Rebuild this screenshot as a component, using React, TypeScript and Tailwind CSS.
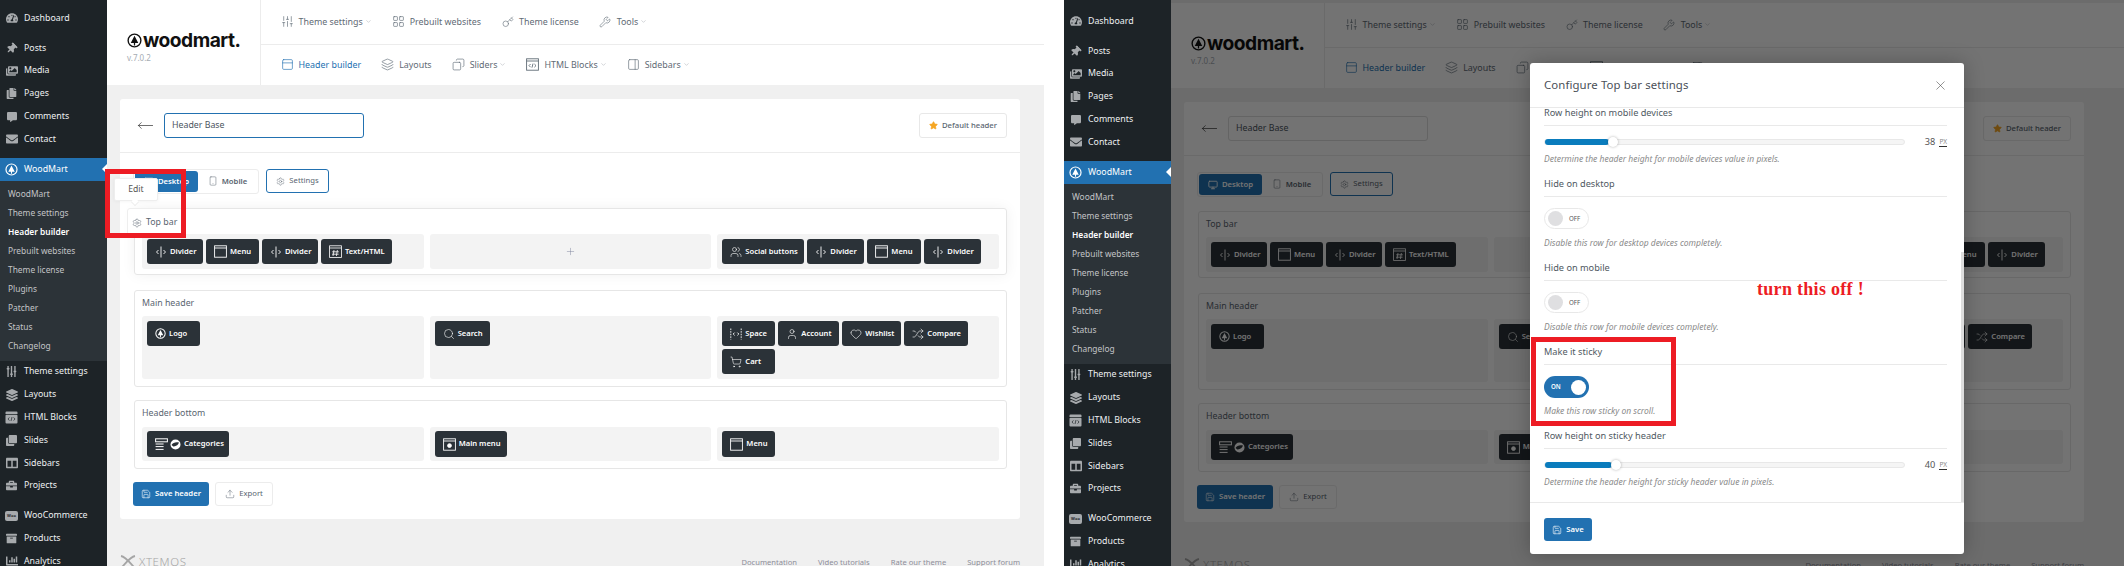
import React from "react";
import {
  SlidersVertical, LayoutGrid, Key, Wrench, ChevronDown, PanelTop, Layers, Copy, PanelRight,
  MoveLeft, Star, Monitor, Smartphone, Settings, Plus, Users, Search, User, Heart, Shuffle, ShoppingCart, Save, Upload, X,
} from "lucide-react";
import {
  FaTachometerAlt, FaThumbtack, FaImages, FaCopy, FaCommentAlt, FaEnvelope, FaSlidersH, FaLayerGroup, FaClone, FaColumns, FaBriefcase, FaArchive, FaChartBar,
} from "react-icons/fa";

function TreeMark({ size = 14, color = "currentColor", fill = "none" }: { size?: number; color?: string; fill?: string }) {
  return (
    <svg width={size} height={size} viewBox="0 0 24 24" className="shrink-0">
      <circle cx="12" cy="12" r="10.2" fill={fill} stroke={color} strokeWidth="2.2" />
      <path d="M12 4.5 18 16h-5v4h-2v-4H6z" fill={color} />
    </svg>
  );
}

function DividerIcon() {
  return (
    <svg width="12" height="12" viewBox="0 0 12 12" fill="none" stroke="currentColor" strokeWidth="0.9" className="shrink-0">
      <path d="M6 0.5v11" />
      <path d="M3.5 4 1.5 6l2 2M8.5 4l2 2-2 2" />
    </svg>
  );
}
function SpaceIcon() {
  return (
    <svg width="12" height="12" viewBox="0 0 12 12" fill="none" stroke="currentColor" strokeWidth="0.9" className="shrink-0">
      <path d="M0.8 0.5v11M11.2 0.5v11" strokeDasharray="1.6 1" />
      <path d="M4.6 4.6 3.2 6l1.4 1.4M7.4 4.6 8.8 6 7.4 7.4" />
    </svg>
  );
}
function HtmlIcon() {
  return (
    <svg width="13" height="13" viewBox="0 0 13 13" fill="none" stroke="currentColor" strokeWidth="0.8" className="shrink-0">
      <rect x="0.6" y="0.8" width="11.8" height="11.6" />
      <path d="M0.6 3h11.8M5 5l-1 6M8.4 5l-1 6M3.2 6.8h6.6M3 9.2h6.6" />
    </svg>
  );
}
function MenuIcon() {
  return (
    <svg width="13" height="13" viewBox="0 0 13 13" fill="none" stroke="currentColor" strokeWidth="0.9" className="shrink-0">
      <rect x="0.6" y="0.8" width="11.8" height="11.4" />
      <path d="M0.6 3h11.8" />
    </svg>
  );
}
function MainMenuIcon() {
  return (
    <svg width="13" height="13" viewBox="0 0 13 13" fill="none" stroke="currentColor" strokeWidth="0.9" className="shrink-0">
      <rect x="0.6" y="0.8" width="11.8" height="11.4" />
      <path d="M0.6 3h11.8" />
      <circle cx="6.5" cy="7.6" r="1.9" fill="currentColor" />
    </svg>
  );
}
function CategoriesIcon() {
  return (
    <span className="flex items-center gap-[2px] shrink-0">
      <svg width="13" height="13" viewBox="0 0 13 13" fill="none" stroke="currentColor" strokeWidth="1">
        <rect x="0.6" y="0.8" width="11.8" height="3" />
        <path d="M0.6 6h8M0.6 8.6h8M0.6 11.4h8" />
      </svg>
      <svg width="11" height="11" viewBox="0 0 11 11">
        <circle cx="5.5" cy="5.5" r="5" fill="#fff" />
        <path d="M1.5 6C3 3.5 6 2.8 9 3.6 8.4 6 6 7.6 3.4 7.4z" fill="#2b3238" />
      </svg>
    </span>
  );
}
function HtmlBlockNavIcon() {
  return (
    <svg width="13" height="13" viewBox="0 0 13 13" fill="none" stroke="currentColor" strokeWidth="0.9">
      <rect x="0.6" y="0.8" width="11.8" height="11.4" />
      <path d="M0.6 3h11.8M4.6 6 3 7.6l1.6 1.6M8.4 6 10 7.6 8.4 9.2M7 5.6 6 9.6" />
    </svg>
  );
}
function HtmlBlockWpIcon() {
  return (
    <svg width="13" height="13" viewBox="0 0 13 13">
      <path d="M1.5 0.5h10a1 1 0 0 1 1 1V3H.5V1.500a1 1 0 0 1 1-1z" fill="currentColor" />
      <rect x="0.5" y="3.800" width="12" height="8.700" rx="1" fill="currentColor" />
      <path d="M4.400 6.400 3 8l1.400 1.600M8.600 6.400 10 8 8.600 9.600M7 6 6 10" fill="none" stroke="#1d2327" strokeWidth="0.7" />
    </svg>
  );
}

const wpItemsA = [
  { t: "Dashboard", i: <FaTachometerAlt size={12} />, c: "" },
  { t: "Posts", i: <FaThumbtack size={11} className="rotate-45" />, c: "mt-[7px]" },
  { t: "Media", i: <FaImages size={12} />, c: "" },
  { t: "Pages", i: <FaCopy size={11} />, c: "" },
  { t: "Comments", i: <FaCommentAlt size={10} />, c: "" },
  { t: "Contact", i: <FaEnvelope size={12} />, c: "" },
];
const wpSub = ["WoodMart", "Theme settings", "Header builder", "Prebuilt websites", "Theme license", "Plugins", "Patcher", "Status", "Changelog"];
const wpItemsB = [
  { t: "Theme settings", i: <FaSlidersH size={11} className="rotate-90" />, c: "" },
  { t: "Layouts", i: <FaLayerGroup size={12} />, c: "" },
  { t: "HTML Blocks", i: <HtmlBlockWpIcon />, c: "" },
  { t: "Slides", i: <FaClone size={11} />, c: "" },
  { t: "Sidebars", i: <FaColumns size={12} />, c: "" },
  { t: "Projects", i: <FaBriefcase size={11} />, c: "" },
  {
    t: "WooCommerce",
    i: <span className="flex h-[10px] w-[13px] items-center justify-center rounded-[2px] bg-[#a7aaad] text-[4px] font-bold leading-none text-[#1d2327]">Woo</span>,
    c: "mt-[7px]",
  },
  { t: "Products", i: <FaArchive size={11} />, c: "" },
  { t: "Analytics", i: <FaChartBar size={12} />, c: "" },
];

function WpRow({ t, i, c }: { t: string; i: React.ReactNode; c: string }) {
  return (
    <div className={`flex h-[22.8px] shrink-0 items-center ${c}`}>
      <span className="flex w-[24px] shrink-0 justify-center pr-[1px] text-[#a7aaad]">{i}</span>
      <span className="whitespace-nowrap text-[8.8px] text-[#eef0f2]">{t}</span>
    </div>
  );
}

function Sidebar({ second }: { second: boolean }) {
  return (
    <aside className={`flex h-full w-[107px] shrink-0 flex-col overflow-hidden bg-[#1d2327] ${second ? "pt-[10px]" : "pt-[7px]"}`}>
      {wpItemsA.map((x) => (
        <WpRow key={x.t} {...x} />
      ))}
      <div className="relative mt-[7px] flex h-[22.8px] shrink-0 items-center bg-[#2271b1]">
        <span className="flex w-[24px] shrink-0 justify-center pr-[1px] text-white">
          <TreeMark size={13} />
        </span>
        <span className="text-[8.8px] text-white">WoodMart</span>
        <span className="absolute right-0 top-[6px] border-y-[5px] border-r-[5px] border-y-transparent border-r-white" />
      </div>
      <div className="flex shrink-0 flex-col bg-[#2c3338] pb-[5px] pt-[4px]">
        {wpSub.map((s) => (
          <div
            key={s}
            className={`flex h-[19px] items-center whitespace-nowrap pl-[8px] text-[8.4px] ${s === "Header builder" ? "font-semibold text-white" : "text-[#c3c4c7]"}`}
          >
            {s}
          </div>
        ))}
      </div>
      {wpItemsB.map((x) => (
        <WpRow key={x.t} {...x} />
      ))}
    </aside>
  );
}

function NavItem({ icon, text, chev, active }: { icon: React.ReactNode; text: string; chev?: boolean; active?: boolean }) {
  return (
    <div className={`flex items-center whitespace-nowrap text-[8.9px] ${active ? "text-[#2271b1]" : "text-[#5f6b75]"}`}>
      <span className={`mr-[5px] flex w-[13px] justify-center ${active ? "text-[#2271b1]" : "text-[#5f6b75]"}`}>{icon}</span>
      {text}
      {chev && <ChevronDown size={7} className="ml-[2px] text-[#b5b9bd]" />}
    </div>
  );
}

function AdminHeader() {
  return (
    <header className="flex h-[85px] shrink-0 bg-white">
      <div className="flex w-[153.5px] shrink-0 flex-col border-r border-[#ececec] pl-[20px] pt-[28px]">
        <div className="flex items-center gap-[1px] text-[#111]">
          <TreeMark size={15} color="#111" />
          <span className="font-['Inter',sans-serif] text-[19.2px] font-bold leading-[24px] tracking-[-0.5px]">woodmart.</span>
        </div>
        <span className="text-[8px] leading-[12px] text-[#a5acb3]">v.7.0.2</span>
      </div>
      <div className="flex flex-1 flex-col">
        <div className="flex h-[44.5px] items-center gap-[20px] border-b border-[#ececec] pl-[20px]">
          <NavItem icon={<SlidersVertical size={13} strokeWidth={1.2} />} text="Theme settings" chev />
          <NavItem icon={<LayoutGrid size={13} strokeWidth={1.2} />} text="Prebuilt websites" />
          <NavItem icon={<Key size={12} strokeWidth={1.2} />} text="Theme license" />
          <NavItem icon={<Wrench size={12} strokeWidth={1.2} />} text="Tools" chev />
        </div>
        <div className="flex flex-1 items-center gap-[20px] pl-[20px]">
          <NavItem icon={<PanelTop size={13} strokeWidth={1.2} />} text="Header builder" active />
          <NavItem icon={<Layers size={13} strokeWidth={1.2} />} text="Layouts" />
          <NavItem icon={<Copy size={13} strokeWidth={1.2} className="-scale-x-100" />} text="Sliders" chev />
          <NavItem icon={<HtmlBlockNavIcon />} text="HTML Blocks" chev />
          <NavItem icon={<PanelRight size={13} strokeWidth={1.2} />} text="Sidebars" chev />
        </div>
      </div>
    </header>
  );
}

function Tag({ icon, text, w }: { icon: React.ReactNode; text: string; w: string }) {
  return (
    <div className={`flex h-full shrink-0 items-center gap-[3px] rounded-[3px] bg-[#2b3238] pl-[8px] text-[7.6px] font-semibold text-white ${w}`}>
      {icon}
      <span className="whitespace-nowrap">{text}</span>
    </div>
  );
}

function ToolbarButton({ children, className }: { children: React.ReactNode; className: string }) {
  return <div className={`flex items-center justify-center gap-[4px] rounded-[3px] text-[7.7px] ${className}`}>{children}</div>;
}

function Card({ second }: { second: boolean }) {
  return (
    <section className="ml-[13px] mt-[14px] h-[420px] w-[900px] shrink-0 rounded-[3px] bg-white">
      <div className="flex h-[54px] items-center border-b border-[#ececec] pl-[17px] pr-[13px]">
        <MoveLeft size={17} strokeWidth={1} className="text-[#333]" />
        <div
          className={`ml-[10px] flex h-[25px] w-[200px] items-center rounded-[3px] border bg-white pl-[7px] text-[8.8px] text-[#4b5560] ${second ? "border-[#dddddd]" : "border-[#2271b1]"}`}
        >
          Header Base
        </div>
        <ToolbarButton className="ml-auto h-[25px] w-[88px] border border-[#e8e8e8] font-medium text-[#5a6570]">
          <Star size={9} className="fill-[#f5a623] text-[#f5a623]" />
          Default header
        </ToolbarButton>
      </div>
      <div className="ml-[13px] mt-[16px] flex gap-[7px]">
        <div className="flex h-[25px] w-[126px] items-center rounded-[3px] border border-[#ececec] p-[1px]">
          <div className="flex h-full w-[63px] items-center justify-center gap-[4px] rounded-[3px] bg-[#2271b1] text-[7.7px] font-semibold text-white">
            <Monitor size={10} />
            Desktop
          </div>
          <div className="flex flex-1 items-center justify-center gap-[4px] text-[7.7px] font-semibold text-[#5a6570]">
            <Smartphone size={10} strokeWidth={1.2} />
            Mobile
          </div>
        </div>
        <ToolbarButton className="h-[24px] w-[63px] border border-[#2271b1] text-[#5a6570]">
          <Settings size={9} strokeWidth={1.2} />
          Settings
        </ToolbarButton>
      </div>

      <div className={`ml-[14px] mt-[14px] h-[67px] w-[873px] rounded-[3px] border border-[#e6e6e6] px-[7px] ${second ? "" : "shadow-[0_0_14px_rgba(0,0,0,0.06)]"}`}>
        <div className="flex h-[25px] items-center text-[8.8px] text-[#5a6570]">Top bar</div>
        <div className="grid h-[35px] grid-cols-3 gap-[6px]">
          <div className="flex gap-[3px] rounded-[3px] bg-[#f3f3f3] px-[5px] py-[5px]">
            <Tag icon={<DividerIcon />} text="Divider" w="w-[56px]" />
            <Tag icon={<MenuIcon />} text="Menu" w="w-[53px]" />
            <Tag icon={<DividerIcon />} text="Divider" w="w-[56px]" />
            <Tag icon={<HtmlIcon />} text="Text/HTML" w="w-[71px]" />
          </div>
          <div className="flex items-center justify-center rounded-[3px] bg-[#f3f3f3] text-[#7a7f99]">
            <Plus size={11} strokeWidth={1} />
          </div>
          <div className="flex gap-[3px] rounded-[3px] bg-[#f3f3f3] px-[5px] py-[5px]">
            <Tag icon={<Users size={12} strokeWidth={1.2} />} text="Social buttons" w="w-[82px]" />
            <Tag icon={<DividerIcon />} text="Divider" w="w-[57px]" />
            <Tag icon={<MenuIcon />} text="Menu" w="w-[54px]" />
            <Tag icon={<DividerIcon />} text="Divider" w="w-[57px]" />
          </div>
        </div>
      </div>

      <div className="ml-[14px] mt-[15px] h-[97px] w-[873px] rounded-[3px] border border-[#e6e6e6] px-[7px]">
        <div className="flex h-[25px] items-center text-[8.8px] text-[#5a6570]">Main header</div>
        <div className="grid h-[63px] grid-cols-3 gap-[6px]">
          <div className="flex rounded-[3px] bg-[#f3f3f3] p-[5px]">
            <div className="h-[25px]">
              <Tag icon={<TreeMark size={11} />} text="Logo" w="w-[53px]" />
            </div>
          </div>
          <div className="flex rounded-[3px] bg-[#f3f3f3] p-[5px]">
            <div className="h-[25px]">
              <Tag icon={<Search size={12} strokeWidth={1.2} />} text="Search" w="w-[55px]" />
            </div>
          </div>
          <div className="flex flex-wrap content-start gap-[3px] rounded-[3px] bg-[#f3f3f3] p-[5px]">
            <div className="h-[25px]">
              <Tag icon={<SpaceIcon />} text="Space" w="w-[53px]" />
            </div>
            <div className="h-[25px]">
              <Tag icon={<User size={12} strokeWidth={1.2} />} text="Account" w="w-[61px]" />
            </div>
            <div className="h-[25px]">
              <Tag icon={<Heart size={12} strokeWidth={1.2} />} text="Wishlist" w="w-[59px]" />
            </div>
            <div className="h-[25px]">
              <Tag icon={<Shuffle size={12} strokeWidth={1.2} />} text="Compare" w="w-[64px]" />
            </div>
            <div className="h-[25px]">
              <Tag icon={<ShoppingCart size={12} strokeWidth={1.2} />} text="Cart" w="w-[53px]" />
            </div>
          </div>
        </div>
      </div>

      <div className="ml-[14px] mt-[13px] h-[69px] w-[873px] rounded-[3px] border border-[#e6e6e6] px-[7px]">
        <div className="flex h-[26px] items-center text-[8.8px] text-[#5a6570]">Header bottom</div>
        <div className="grid h-[34px] grid-cols-3 gap-[6px]">
          <div className="flex rounded-[3px] bg-[#f3f3f3] px-[5px] py-[4px]">
            <Tag icon={<CategoriesIcon />} text="Categories" w="w-[82px]" />
          </div>
          <div className="flex rounded-[3px] bg-[#f3f3f3] px-[5px] py-[4px]">
            <Tag icon={<MainMenuIcon />} text="Main menu" w="w-[72px]" />
          </div>
          <div className="flex rounded-[3px] bg-[#f3f3f3] px-[5px] py-[4px]">
            <Tag icon={<MenuIcon />} text="Menu" w="w-[53px]" />
          </div>
        </div>
      </div>

      <div className="ml-[13px] mt-[13px] flex gap-[6px]">
        <ToolbarButton className="h-[24px] w-[76px] bg-[#2271b1] font-semibold text-white">
          <Save size={10} strokeWidth={1.4} />
          Save header
        </ToolbarButton>
        <ToolbarButton className="h-[24px] w-[58px] border border-[#ececec] text-[#5a6570]">
          <Upload size={10} strokeWidth={1.2} />
          Export
        </ToolbarButton>
      </div>
    </section>
  );
}

function PageFooter() {
  return (
    <footer className="ml-[13px] mt-[36px] flex w-[900px] shrink-0 items-start justify-between">
      <div className="flex items-center gap-[3px] text-[#a5a5a5]">
        <svg width="16" height="14" viewBox="0 0 16 14" fill="none" stroke="currentColor" strokeWidth="1.8">
          <path d="M1 1c5 1 9 7 14 12M15 1C10 2 6 8 1 13" />
        </svg>
        <span className="text-[11.5px] font-light leading-[14px] tracking-[0.6px]">XTEMOS</span>
      </div>
      <div className="flex gap-[21px] text-[7.6px] leading-[14px] text-[#8d8d99]">
        <span>Documentation</span>
        <span>Video tutorials</span>
        <span>Rate our theme</span>
        <span>Support forum</span>
      </div>
    </footer>
  );
}

function Label({ text }: { text: string }) {
  return <div className="flex h-[27px] items-center border-b border-[#e9e9e9] pt-[2px] text-[9.2px] text-[#4f5962]">{text}</div>;
}
function Desc({ text }: { text: string }) {
  return <div className="flex h-[14px] items-center whitespace-nowrap text-[8.5px] italic text-[#8a8a8a]">{text}</div>;
}

function SliderSection({ label, desc, value, fill, thumb }: { label: string; desc: string; value: string; fill: string; thumb: string }) {
  return (
    <div className="pb-[4px]">
      <Label text={label} />
      <div className="mt-[6px] flex h-[20px] items-center justify-between">
        <div className="relative h-[6px] w-[361px] rounded-full border border-[#e8e8e8] bg-[#f5f5f5]">
          <div className={`absolute -inset-y-px left-0 rounded-full bg-[#0a7cbd] ${fill}`} />
          <div className={`absolute -top-[3px] size-[10px] rounded-full bg-white shadow-[0_0_3px_rgba(0,0,0,0.3)] ${thumb}`} />
        </div>
        <div className="flex items-center gap-[4px] text-[9.2px] text-[#555]">
          {value}
          <span className="border-b border-[#333] text-[6.5px] leading-[9px] text-[#888]">PX</span>
        </div>
      </div>
      <Desc text={desc} />
    </div>
  );
}

function ToggleSection({ label, desc, on }: { label: string; desc: string; on?: boolean }) {
  return (
    <div className="pb-[4px]">
      <Label text={label} />
      <div className="mt-[11px] flex h-[21px]">
        {on ? (
          <div className="flex h-[22px] w-[45px] items-center justify-between rounded-full bg-[#2271b1] pl-[7px] pr-[3px]">
            <span className="text-[6.2px] font-semibold text-white">ON</span>
            <span className="size-[15px] rounded-full bg-white" />
          </div>
        ) : (
          <div className="flex h-[21px] w-[45px] items-center gap-[6px] rounded-full border border-[#e8e8e8] bg-white pl-[3px]">
            <span className="size-[15px] rounded-full bg-[#dfdfe1]" />
            <span className="text-[6.2px] text-[#555]">OFF</span>
          </div>
        )}
      </div>
      <div className="mt-[7px]">
        <Desc text={desc} />
      </div>
    </div>
  );
}

function Modal() {
  return (
    <div className="absolute left-[466px] top-[63px] z-10 flex h-[491px] w-[434px] flex-col rounded-[3px] bg-white shadow-[0_0_20px_rgba(0,0,0,0.25)]">
      <div className="flex h-[45px] shrink-0 items-center justify-between border-b border-[#e9e9e9] pl-[14px] pr-[16px]">
        <span className="text-[11.4px] tracking-[0.1px] text-[#4a5058]">Configure Top bar settings</span>
        <X size={15} strokeWidth={0.9} className="text-[#444]" />
      </div>
      <div className="relative h-[395px] shrink-0 overflow-hidden border-b border-[#e9e9e9]">
        <div className="-mt-[9px] ml-[14px] w-[403px]">
          <SliderSection
            label="Row height on mobile devices"
            desc="Determine the header height for mobile devices value in pixels."
            value="38"
            fill="w-[64px]"
            thumb="left-[63px]"
          />
          <ToggleSection label="Hide on desktop" desc="Disable this row for desktop devices completely." />
          <ToggleSection label="Hide on mobile" desc="Disable this row for mobile devices completely." />
          <ToggleSection label="Make it sticky" desc="Make this row sticky on scroll." on />
          <SliderSection
            label="Row height on sticky header"
            desc="Determine the header height for sticky header value in pixels."
            value="40"
            fill="w-[67px]"
            thumb="left-[66px]"
          />
        </div>
        <div className="absolute bottom-0 right-0 h-[250px] w-[3px] bg-[#dddddd]" />
      </div>
      <div className="pl-[14px] pt-[15px]">
        <ToolbarButton className="h-[23px] w-[48px] bg-[#2271b1] font-semibold text-white">
          <Save size={10} strokeWidth={1.4} />
          Save
        </ToolbarButton>
      </div>
    </div>
  );
}

function Panel({ second, width }: { second: boolean; width: string }) {
  return (
    <div className={`relative flex h-[566px] shrink-0 overflow-hidden ${width}`}>
      <Sidebar second={second} />
      <main className={`relative flex flex-1 flex-col bg-[#f0f0f0] ${second ? "pt-[3px]" : ""}`}>
        <AdminHeader />
        <Card second={second} />
        <PageFooter />
        {second && <div className="absolute inset-0 bg-black/55" />}
      </main>
      {!second && (
        <>
          <div className="absolute left-[127px] top-[208px] flex h-[30px] w-[56px] items-start gap-[4px] rounded-[3px] border border-[#eeeeee] bg-white pl-[4px] pt-[7px] text-[8.8px] text-[#5a6570]">
            <Settings size={10} strokeWidth={1.2} className="mt-[2px]" />
            Top bar
          </div>
          <div className="absolute left-[114px] top-[178px] flex h-[23px] w-[44px] items-center justify-center rounded-[2px] border border-[#eeeeee] bg-white text-[8.6px] text-[#555] shadow-[0_0_4px_rgba(0,0,0,0.06)]">
            Edit
          </div>
          <div className="absolute left-[132px] top-[198.5px] size-[6px] rotate-45 border-b border-r border-[#eeeeee] bg-white" />
          <div className="absolute left-[105px] top-[169px] h-[69px] w-[81px] border-[5px] border-[#ed1c24]" />
        </>
      )}
      {second && (
        <>
          <Modal />
          <div className="absolute left-[693px] top-[278px] z-20 whitespace-nowrap font-['Liberation_Serif',serif] text-[18px] font-bold leading-[22px] tracking-[0.3px] text-[#ed1c24]">
            turn this off !
          </div>
          <div className="absolute left-[467px] top-[337px] z-20 h-[89px] w-[145px] border-[5px] border-[#ed1c24]" />
        </>
      )}
    </div>
  );
}

export default function App() {
  return (
    <div className="flex h-[566px] w-[2124px] gap-[20px] overflow-hidden bg-white font-['Noto_Sans',sans-serif]">
      <Panel second={false} width="w-[1044px]" />
      <Panel second width="w-[1060px]" />
    </div>
  );
}
